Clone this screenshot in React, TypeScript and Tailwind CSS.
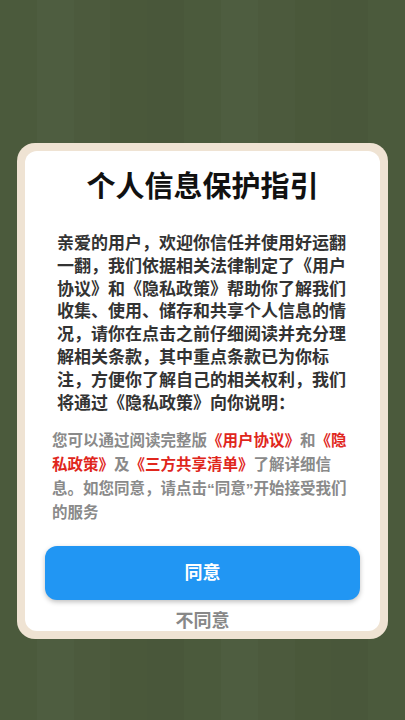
import React from 'react';

const COLS = 11;
const ROWS = 16;

// subtle tile colours of the backdrop
const tileColor = (i: number) => {
  const palette = ['bg-[#4b5a3c]', 'bg-[#4a583a]', 'bg-[#4e5d40]', 'bg-[#49573a]', 'bg-[#4c5a3d]'];
  return palette[(i * 7 + Math.floor(i / COLS) * 3) % palette.length];
};

const Backdrop = () => (
  <div className="absolute inset-0 grid grid-cols-11 grid-rows-[repeat(16,1fr)]">
    {Array.from({ length: COLS * ROWS }).map((_, i) => (
      <div key={i} className={tileColor(i)} />
    ))}
  </div>
);

const Red = ({ children }: { children: React.ReactNode }) => (
  <span className="font-bold text-[#e0261c]">{children}</span>
);

export default function App() {
  return (
    <div
      className="relative w-[405px] h-[720px] overflow-hidden bg-[#4b5a3c]"
      style={{ fontFamily: "'Liberation Sans', 'Noto Sans CJK SC', sans-serif" }}
    >
      <Backdrop />
      <div className="relative flex flex-col pt-[143px] px-[17px]">
        <div className="rounded-[18px] bg-[#efe3d3] p-[8px]">
          <div className="h-[480px] overflow-hidden rounded-[12px] bg-white flex flex-col">
            <h1 className="pt-[18px] text-center text-[29px] leading-[36px] font-bold text-[#111]">
              个人信息保护指引
            </h1>
            <p className="mt-[28px] mx-[32px] text-[17px] leading-[22.8px] font-bold text-[#333]">
              亲爱的用户，欢迎你信任并使用好运翻一翻，我们依据相关法律制定了《用户协议》和《隐私政策》帮助你了解我们收集、使用、储存和共享个人信息的情况，请你在点击之前仔细阅读并充分理解相关条款，其中重点条款已为你标注，方便你了解自己的相关权利，我们将通过《隐私政策》向你说明：
            </p>
            <p className="mt-[14px] ml-[27px] mr-[28px] text-[15.5px] leading-[24px] font-bold text-[#8a8a8a]">
              您可以通过阅读完整版<Red>《用户协议》</Red>和<Red>《隐</Red>
              <br />
              <Red>私政策》</Red>及<Red>《三方共享清单》</Red>了解详细信
              <br />
              息。如您同意，请点击“同意”开始接受我们的服务
            </p>
            <button className="mt-[21px] mx-[20px] h-[54px] shrink-0 rounded-[12px] bg-[#2196f3] text-[18px] font-semibold text-white shadow-[0_2px_5px_rgba(0,0,0,0.25)]">
              同意
            </button>
            <button className="mt-[9px] text-[18px] leading-[24px] font-bold text-[#888]">不同意</button>
          </div>
        </div>
      </div>
    </div>
  );
}
